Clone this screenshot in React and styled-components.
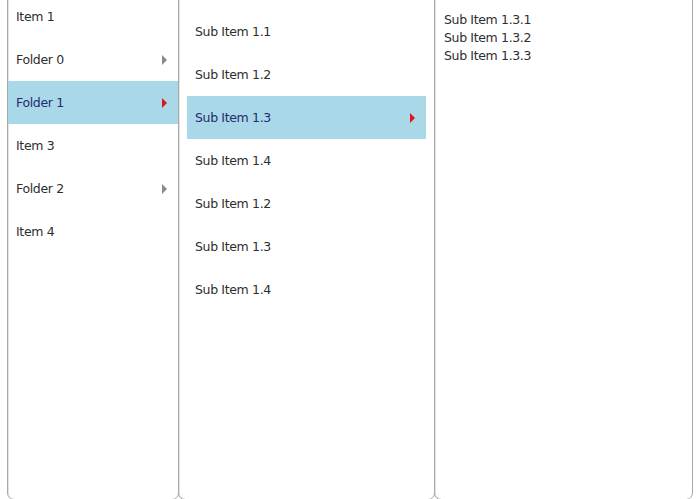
import React from "react";
import styled, { createGlobalStyle } from "styled-components";

const Global = createGlobalStyle`
  html, body {
    margin: 0;
    padding: 0;
    background: #fff;
    overflow: hidden;
  }
  body {
    font-family: "DejaVu Sans", Tahoma, sans-serif;
  }
`;

const Columns = styled.div`
  display: flex;
  margin: -6px 0 0 7px;
  height: 506px;
`;

const Panel = styled.div`
  box-sizing: border-box;
  width: ${({ w }) => w}px;
  margin-left: ${({ first }) => (first ? 0 : -1)}px;
  border: 1px solid #a9a9a9;
  border-radius: 7px;
  padding: ${({ pad }) => pad};
  background: #fff;
  box-shadow: inset 1px 0 0 #e4e4e4;
`;

const Row = styled.div`
  display: flex;
  align-items: center;
  justify-content: space-between;
  height: 43px;
  padding: 0 11px 0 8px;
  font-size: 12.5px;
  letter-spacing: -0.35px;
  color: ${({ active }) => (active ? "#1f2c6e" : "#2e2e2e")};
  background: ${({ active }) => (active ? "#a9d8e8" : "transparent")};
`;

const Arrow = styled.span`
  width: 0;
  height: 0;
  border-top: 5px solid transparent;
  border-bottom: 5px solid transparent;
  border-left: 5px solid ${({ active }) => (active ? "#e0141e" : "#8a8a8a")};
`;

const Line = styled.div`
  font-size: 12.5px;
  letter-spacing: -0.35px;
  line-height: 18px;
  color: #2e2e2e;
`;

const first = [
  { label: "Item 1" },
  { label: "Folder 0", folder: true },
  { label: "Folder 1", folder: true, active: true },
  { label: "Item 3" },
  { label: "Folder 2", folder: true },
  { label: "Item 4" },
];

const second = [
  { label: "Sub Item 1.1" },
  { label: "Sub Item 1.2" },
  { label: "Sub Item 1.3", folder: true, active: true },
  { label: "Sub Item 1.4" },
  { label: "Sub Item 1.2" },
  { label: "Sub Item 1.3" },
  { label: "Sub Item 1.4" },
];

const third = ["Sub Item 1.3.1", "Sub Item 1.3.2", "Sub Item 1.3.3"];

const Rows = ({ items }) =>
  items.map((it, i) => (
    <Row key={i} active={it.active}>
      <span>{it.label}</span>
      {it.folder && <Arrow active={it.active} />}
    </Row>
  ));

export default function App() {
  return (
    <>
      <Global />
      <Columns>
        <Panel first w={172} pad="0">
          <Rows items={first} />
        </Panel>
        <Panel w={257} pad="15px 8px 0 8px">
          <Rows items={second} />
        </Panel>
        <Panel w={259} pad="16px 9px 0 9px">
          {third.map((t) => (
            <Line key={t}>{t}</Line>
          ))}
        </Panel>
      </Columns>
    </>
  );
}
